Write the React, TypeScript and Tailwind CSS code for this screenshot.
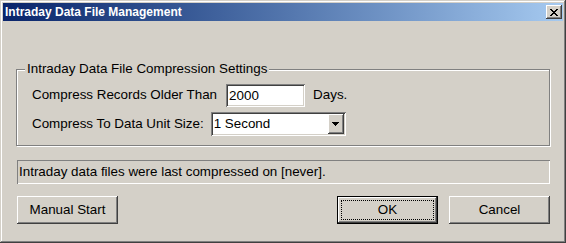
import { useState } from 'react';

const face = 'bg-[#d4d0c8]';
const raised =
  'shadow-[inset_-1px_-1px_#404040,inset_1px_1px_#ffffff,inset_-2px_-2px_#808080,inset_2px_2px_#d4d0c8]';
const sunken =
  'shadow-[inset_1px_1px_#808080,inset_-1px_-1px_#ffffff,inset_2px_2px_#404040,inset_-2px_-2px_#d4d0c8]';

export default function App() {
  const [days, setDays] = useState('2000');

  return (
    <div
      className={`w-[566px] h-[243px] ${face} p-[3px] flex flex-col shadow-[inset_-1px_-1px_#404040,inset_1px_1px_#d4d0c8,inset_-2px_-2px_#808080,inset_2px_2px_#ffffff] text-[13.4px] text-black`}
      style={{ fontFamily: '"Liberation Sans", Arial, sans-serif' }}
    >
      <div className="h-[18px] flex items-center justify-between pl-[2px] pr-[1px] bg-gradient-to-r from-[#0a246a] to-[#a6caf0]">
        <span className="text-white font-bold text-[12px] leading-none">Intraday Data File Management</span>
        <button className={`w-[16px] h-[14px] ${face} ${raised} flex items-center justify-center`}>
          <svg width="8" height="7" viewBox="0 0 8 7" shapeRendering="crispEdges">
            <path
              d="M0 0h2v1H0zM6 0h2v1H6zM1 1h2v1H1zM5 1h2v1H5zM2 2h4v1H2zM3 3h2v1H3zM2 4h4v1H2zM1 5h2v1H1zM5 5h2v1H5zM0 6h2v1H0zM6 6h2v1H6z"
              fill="#000"
            />
          </svg>
        </button>
      </div>

      <div className="flex flex-col pl-[13px] pr-[13px]">
        <div className="relative mt-[48px] h-[77px] border border-[#808080] shadow-[inset_1px_1px_#ffffff,1px_1px_#ffffff] pl-[15px] pt-[14px]">
          <span className={`absolute -top-[9px] left-[8px] px-[2px] ${face} leading-[16px]`}>
            Intraday Data File Compression Settings
          </span>

          <div className="flex items-center h-[23px]">
            <span>Compress Records Older Than</span>
            <input
              value={days}
              onChange={(e) => setDays(e.target.value)}
              className={`ml-[9px] w-[79px] h-[23px] bg-white ${sunken} px-[3px] outline-none text-[13.4px]`}
            />
            <span className="ml-[8px]">Days.</span>
          </div>

          <div className="flex items-center h-[24px] mt-[5px]">
            <span>Compress To Data Unit Size:</span>
            <div className={`ml-[7px] w-[135px] h-[24px] bg-white ${sunken} flex items-center pl-[3px] pr-[2px]`}>
              <span className="flex-1">1 Second</span>
              <div className={`w-[16px] h-[20px] ${face} ${raised} flex items-center justify-center`}>
                <svg width="7" height="4" viewBox="0 0 7 4" shapeRendering="crispEdges">
                  <path d="M0 0h7v1H0zM1 1h5v1H1zM2 2h3v1H2zM3 3h1v1H3z" fill="#000" />
                </svg>
              </div>
            </div>
          </div>
        </div>

        <div className="mt-[14px] ml-[1px] h-[24px] shadow-[inset_1px_1px_#808080,inset_-1px_-1px_#ffffff] flex items-center pl-[2px]">
          Intraday data files were last compressed on [never].
        </div>

        <div className="mt-[12px] ml-[1px] flex items-center">
          <button className={`w-[101px] h-[28px] ${face} ${raised}`}>Manual Start</button>
          <button className={`ml-auto w-[101px] h-[28px] ${face} border border-black p-[3px] shadow-[inset_-1px_-1px_#404040,inset_1px_1px_#ffffff,inset_-2px_-2px_#808080]`}>
            <span className="w-full h-full flex items-center justify-center border border-dotted border-black">OK</span>
          </button>
          <button className={`ml-[11px] w-[101px] h-[28px] ${face} ${raised}`}>Cancel</button>
        </div>
      </div>
    </div>
  );
}
